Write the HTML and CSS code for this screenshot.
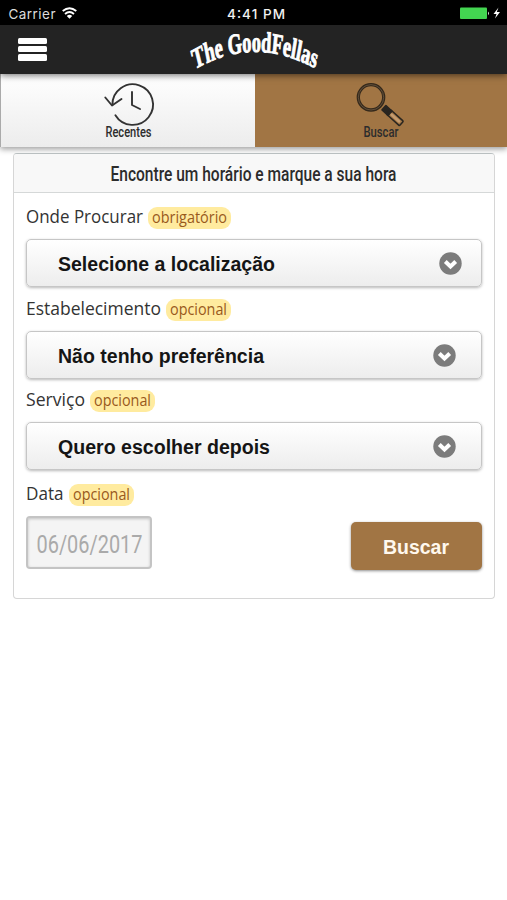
FILE: index.html
```html
<!DOCTYPE html>
<html lang="pt">
<head>
<meta charset="utf-8">
<title>The GoodFellas</title>
<link rel="stylesheet" href="styles.css">
</head>
<body>
<div class="status">
  <div class="carrier">
    <svg width="80" height="25"><text class="sys" x="8.500" y="18.500" textLength="47">Carrier</text>
      <g fill="none" stroke="#fff" stroke-width="1.900"><path d="M62.700 10.900Q69.500 5.400 76.300 10.900"/><path d="M65 13.900Q69.500 10.200 74 13.900"/></g><path d="M66.800 15.900Q69.500 13.800 72.200 15.900L69.500 18.700Z" fill="#fff"/></svg>
  </div>
  <svg width="60" height="25"><text class="sys time" x="1" y="18.500" textLength="58">4:41 PM</text></svg>
  <div class="battery">
    <svg width="50" height="25"><rect x="3" y="7.500" width="27" height="11.500" rx="1" fill="#43d551"/><path d="M31 11.500q2 1.800 0 3.800z" fill="#ddd"/><path d="M41.500 7.500L36.500 14h3l-1.500 4.500 5-6.500h-3.200z" fill="#fff"/></svg>
  </div>
</div>
<header class="bar">
  <div class="menu"><i></i><i></i><i></i></div>
  <svg class="logo" width="150" height="49" viewBox="180 25 150 49">
    <g transform="translate(254.500 0) scale(.68 1)">
      <path id="arc" fill="none" d="M-88 69.500Q0 34 92 69.500"/>
      <text><textPath href="#arc" textLength="182" lengthAdjust="spacingAndGlyphs">The GoodFellas</textPath></text>
    </g>
  </svg>
</header>
<nav class="tabs">
  <div class="tab">
    <svg width="60" height="73" viewBox="98 74 60 73">
      <g fill="none" stroke="#333" stroke-width="1.900" stroke-linecap="round" stroke-linejoin="round"><path d="M112.400 105A20.300 20.300 0 1 1 115.400 115.200"/><path d="M105.300 97.500L112 105.500L121.500 99"/><path d="M132 92V105L140 109"/></g>
      <text class="cond" x="105.500" y="137.300" font-size="14.500" textLength="46" lengthAdjust="spacingAndGlyphs">Recentes</text>
    </svg>
  </div>
  <div class="tab active">
    <svg width="60" height="73" viewBox="351 74 60 73">
      <circle cx="371" cy="97.300" r="12.700" fill="none" stroke="#35291b" stroke-width="3.300"/>
      <circle cx="371" cy="97.300" r="12.700" fill="none" stroke="#756047" stroke-width=".7"/>
      <g transform="translate(382.500 106.500) rotate(42)"><rect x="1" y="-3.700" width="10" height="7.400" rx="1" fill="#292520"/><rect x="8" y="-3" width="17.500" height="6" rx="1" fill="none" stroke="#292520" stroke-width="1.500"/><rect x="11" y="-1.400" width="12.500" height="2.800" rx="1.400" fill="#c39b70"/></g>
      <text class="cond" x="363.500" y="137.300" font-size="14.500" textLength="35" lengthAdjust="spacingAndGlyphs">Buscar</text>
    </svg>
  </div>
</nav>
<main class="panel">
  <div class="title">
    <svg width="288" height="38"><text class="cond" x="0.500" y="26.500" font-size="20" textLength="286" lengthAdjust="spacingAndGlyphs">Encontre um horário e marque a sua hora</text></svg>
  </div>
  <div class="body">
    <div class="label"><svg width="117" height="22"><text x="0" y="16" textLength="117" lengthAdjust="spacingAndGlyphs">Onde Procurar</text></svg>
      <span class="tag"><svg width="75" height="22"><text x="0" y="16" textLength="75" lengthAdjust="spacingAndGlyphs">obrigatório</text></svg></span></div>
    <div class="select"><svg width="218" height="46"><text x="0" y="30.500" textLength="217" lengthAdjust="spacingAndGlyphs">Selecione a localização</text></svg>
      <svg class="chev far" width="23" height="23"><circle cx="11.500" cy="11.500" r="11.200"/><path d="M6.300 9.500L11.500 14.500L16.700 9.500"/></svg></div>
    <div class="label"><svg width="135" height="22"><text x="0" y="16" textLength="135" lengthAdjust="spacingAndGlyphs">Estabelecimento</text></svg>
      <span class="tag"><svg width="57" height="22"><text x="0" y="16" textLength="57" lengthAdjust="spacingAndGlyphs">opcional</text></svg></span></div>
    <div class="select"><svg width="218" height="46"><text x="0" y="30.500" textLength="206" lengthAdjust="spacingAndGlyphs">Não tenho preferência</text></svg>
      <svg class="chev" width="23" height="23"><circle cx="11.500" cy="11.500" r="11.200"/><path d="M6.300 9.500L11.500 14.500L16.700 9.500"/></svg></div>
    <div class="label"><svg width="59" height="22"><text x="0" y="16" textLength="59" lengthAdjust="spacingAndGlyphs">Serviço</text></svg>
      <span class="tag"><svg width="57" height="22"><text x="0" y="16" textLength="57" lengthAdjust="spacingAndGlyphs">opcional</text></svg></span></div>
    <div class="select"><svg width="218" height="46"><text x="0" y="30.500" textLength="212" lengthAdjust="spacingAndGlyphs">Quero escolher depois</text></svg>
      <svg class="chev" width="23" height="23"><circle cx="11.500" cy="11.500" r="11.200"/><path d="M6.300 9.500L11.500 14.500L16.700 9.500"/></svg></div>
    <div class="label last"><svg width="38" height="22"><text x="0" y="16" textLength="37.500" lengthAdjust="spacingAndGlyphs">Data</text></svg>
      <span class="tag"><svg width="57" height="22"><text x="0" y="16" textLength="57" lengthAdjust="spacingAndGlyphs">opcional</text></svg></span></div>
    <div class="actions">
      <div class="date"><svg width="108" height="49"><text x="0.500" y="35" textLength="106" lengthAdjust="spacingAndGlyphs">06/06/2017</text></svg></div>
      <div class="submit"><svg width="67" height="48"><text x="0" y="32" textLength="66" lengthAdjust="spacingAndGlyphs">Buscar</text></svg></div>
    </div>
  </div>
</main>
</body>
</html>
```
FILE: styles.css
```css
* { box-sizing: border-box; }
body { margin: 0; width: 507px; height: 900px; background: #fff; overflow: hidden; font-family: "Liberation Sans", sans-serif; }
svg { display: block; overflow: visible; flex: none; }
.status { height: 25px; background: #000; display: grid; grid-template-columns: 226px 60px 1fr; }
.battery { display: flex; justify-content: flex-end; padding-right: 4px; }
.battery svg { width: 46px; }
.sys { font: 13.5px Inter, sans-serif; fill: #dcdcdc; }
.time { font-weight: 500; font-size: 13.5px; fill: #f2f2f2; }
.bar { position: relative; height: 49px; background: #232323; display: grid; grid-template-columns: 180px 150px; box-shadow: 0 1px 7px rgba(0,0,0,.6); }
.menu { display: flex; flex-direction: column; gap: 2px; padding: 13px 0 0 18px; }
.menu i { width: 29px; height: 6.2px; background: #fff; border-radius: 1.5px; }
.logo text { font: bold 29px "Liberation Serif", serif; fill: #fff; stroke: #fff; stroke-width: 1px; }
.tabs { height: 73px; display: grid; grid-template-columns: 254.5px 1fr; box-shadow: 0 2px 6px rgba(0,0,0,.4); }
.tab { display: flex; justify-content: center; background: linear-gradient(#fff, #ececec); border-left: 1.5px solid #aaa; }
.tab.active { background: #a17544; border: 0; }
.cond { font-family: Roboto, sans-serif; font-weight: 500; fill: #2c2c2c; }
.panel { margin: 5.5px 12.5px 0 13px; height: 446.5px; border: 1.5px solid #d6d6d6; border-top-color: #b9bfc0; border-radius: 4px; background: #fff; }
.title { height: 39px; display: flex; justify-content: center; background: #f8f8f8; border-bottom: 1px solid #d5d8d8; border-radius: 3px 3px 0 0; }
.body { padding: 14.5px 12.4px 0 12.4px; }
.label { display: flex; gap: 4.5px; height: 32px; }
.label text { font: 18px "Open Sans", sans-serif; fill: #333; }
.label .tag { height: 22px; padding: 0 4px; border-radius: 9px; background: #ffeb9f; }
.label .tag text { font-size: 15.5px; fill: #99591c; }
.select { height: 48px; margin: 0 -.4px 11.5px; padding: 0 25px 0 31px; display: flex; align-items: center; justify-content: space-between; border: 1.5px solid #c6c6c6; border-radius: 5px; background: linear-gradient(#fff, #ededed); box-shadow: 0 1px 3px rgba(0,0,0,.28); }
.select text { font: bold 20px "Liberation Sans", sans-serif; fill: #151515; }
.chev { margin-top: 1px; }
.chev circle { fill: #7c7c7c; }
.chev path { fill: none; stroke: #fff; stroke-width: 4px; }
.chev.far { margin-right: -6px; }
.label.last { padding-top: 2px; height: 34.5px; }
.actions { display: flex; justify-content: space-between; margin: 0 -.4px; }
.date { width: 126px; height: 53px; padding-left: 8px; border: 2px solid #c4c4c4; border-radius: 4px; background: #f4f4f4; box-shadow: inset 0 1px 3px rgba(0,0,0,.2); }
.date text { font: 26.5px Roboto, sans-serif; fill: #aaa; }
.submit { width: 131px; height: 48px; margin-top: 6px; display: flex; justify-content: center; border-radius: 5px; background: #a17544; box-shadow: 0 1px 3px rgba(0,0,0,.45); }
.submit text { font: bold 20px "Liberation Sans", sans-serif; fill: #fff8ee; }
```
